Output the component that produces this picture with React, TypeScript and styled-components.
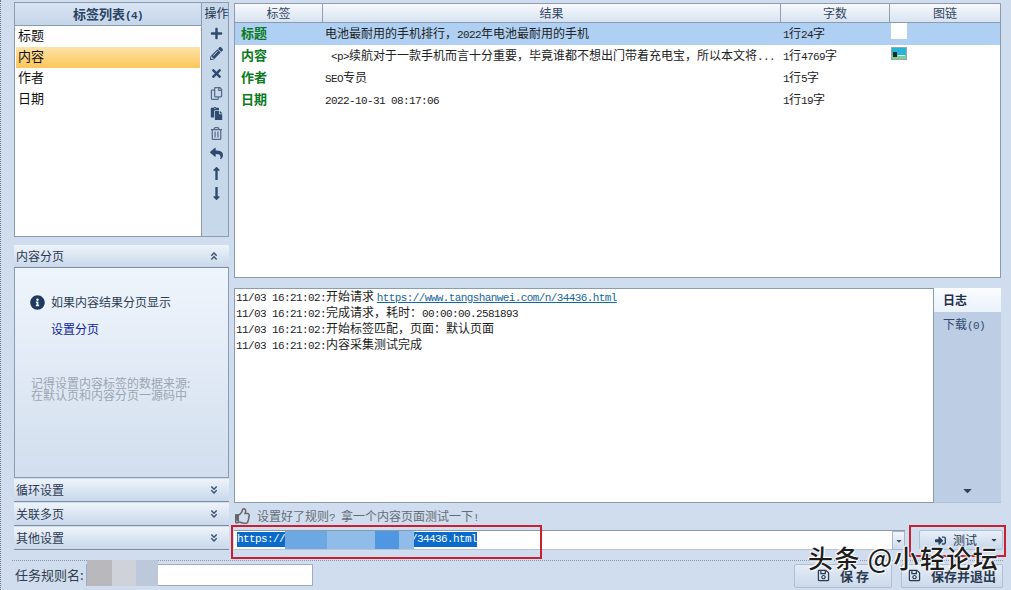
import React from "react";
import styled, { createGlobalStyle } from "styled-components";
import {
  FaPlus, FaPencilAlt, FaTimes, FaRegCopy, FaPaste, FaRegTrashAlt, FaReply,
  FaLongArrowAltUp, FaLongArrowAltDown, FaInfoCircle, FaAngleDoubleUp, FaAngleDoubleDown,
  FaRegThumbsUp, FaRegSave, FaSignInAlt, FaCaretDown,
} from "react-icons/fa";

const Global = createGlobalStyle`
  html, body { margin: 0; padding: 0; background: #d0ddee; }
  * { box-sizing: border-box; }
`;

const CJK = `"Noto Sans CJK SC", "Liberation Sans", sans-serif`;
const LINE = "#8b9bb0";

const Page = styled.div`
  position: relative;
  width: 1011px;
  height: 590px;
  overflow: hidden;
  background: #d0ddee;
  border-left: 1px dotted #6f7b8c;
  padding: 2px 10px 0 13px;
  font: 12px/16px ${CJK};
  color: #1c1c1c;
  display: flex;
  flex-direction: column;
`;
const M = styled.span`
  font-family: "Liberation Mono", monospace;
  font-size: 11px;
  letter-spacing: -0.6px;
  line-height: 1;
`;
const Main = styled.div`
  display: flex;
  gap: 5px;
  height: 548px;
`;
const LeftCol = styled.div`
  width: 215px;
  display: flex;
  flex-direction: column;
`;
const ListBox = styled.div`
  height: 236px;
  display: flex;
  border: 1px solid ${LINE};
  background: #c8d8eb;
`;
const ListPane = styled.div`
  flex: 1;
  display: flex;
  flex-direction: column;
  border-right: 1px solid ${LINE};
`;
const ListHead = styled.div`
  height: 23px;
  line-height: 21px;
  text-align: center;
  font-weight: 700;
  font-size: 13px;
  color: #2b4263;
  background: linear-gradient(#d8e4f3, #c6d6ea);
  border-bottom: 1px solid ${LINE};
`;
const ListBody = styled.div`
  flex: 1;
  background: #fff;
  padding: 0 1px;
`;
const ListItem = styled.div<{ $on?: boolean }>`
  height: 21px;
  line-height: 18px;
  padding-left: 2px;
  font-size: 13px;
  color: #111;
  background: ${(p) => (p.$on ? "linear-gradient(#fde3a8, #fcc65a)" : "transparent")};
`;
const Ops = styled.div`
  width: 26px;
  padding-left: 3px;
  display: flex;
  flex-direction: column;
  align-items: center;
  color: #2f4a6e;
`;
const OpsHead = styled.div`
  height: 20px;
  line-height: 20px;
  font-size: 12px;
  white-space: nowrap;
  color: #23344c;
`;
const OpIcon = styled.div<{ $soft?: boolean }>`
  height: 20px;
  display: flex;
  align-items: center;
  justify-content: center;
  font-size: 13px;
  color: ${(p) => (p.$soft ? "#566a86" : "#2f4a6e")};
`;
const Accordion = styled.div`
  margin-top: 8px;
  flex: 1;
  display: flex;
  flex-direction: column;
  gap: 1px;
`;
const AccHead = styled.div`
  height: 23px;
  display: flex;
  align-items: center;
  justify-content: space-between;
  padding: 0 10px 0 2px;
  font-size: 12px;
  color: #2a3a50;
  background: linear-gradient(#eef3fa, #c9d8eb);
  border-bottom: 1px solid #7d8da3;
  svg { font-size: 10px; color: #3e5677; }
`;
const AccBody = styled.div`
  height: 210px;
  margin-top: -1px;
  border: 1px solid ${LINE};
  border-top: 0;
  background: linear-gradient(#eff5fc, #d2deee);
  padding: 20px 0 0 15px;
`;
const InfoRow = styled.div`
  display: flex;
  align-items: center;
  gap: 6px;
  height: 16px;
  margin-top: 6px;
  color: #2c3e55;
  svg { font-size: 15px; color: #1f3a5c; }
`;
const PagerLink = styled.div`
  margin: 11px 0 0 21px;
  color: #10249c;
`;
const Note = styled.div`
  margin: 40px 0 0 1px;
  line-height: 12px;
  color: #9ba5b1;
`;
const RightCol = styled.div`
  flex: 1;
  display: flex;
  flex-direction: column;
`;
const Table = styled.div`
  height: 275px;
  margin-top: 1px;
  border: 1px solid ${LINE};
  background: #fff;
`;
const Cols = "88px 458px 109px 1fr";
const HeadRow = styled.div`
  display: grid;
  grid-template-columns: ${Cols};
  height: 19px;
  background: linear-gradient(#f7f9fc, #d8e3f1);
  border-bottom: 1px solid ${LINE};
`;
const HeadCell = styled.div`
  text-align: center;
  line-height: 18px;
  font-size: 12px;
  color: #33465f;
  border-right: 1px solid #8f9eb2;
  &:last-child { border-right: 0; }
`;
const Row = styled.div<{ $on?: boolean }>`
  display: grid;
  grid-template-columns: ${Cols};
  height: 22px;
  line-height: 20px;
  background: ${(p) => (p.$on ? "#afd0f3" : "transparent")};
`;
const TagCell = styled.div`
  padding-left: 6px;
  font-size: 13px;
  font-weight: 700;
  color: #0a7a1d;
`;
const Cell = styled.div`
  padding-left: 2px;
  font-size: 12px;
  white-space: pre;
  overflow: hidden;
  color: #222;
`;
const WhiteThumb = styled.div`
  width: 16px;
  height: 16px;
  margin-left: -1px;
  background: #fff;
`;
const Thumb = styled.svg`
  display: block;
  margin: 2px 0 0 -1px;
`;
const LogWrap = styled.div`
  height: 215px;
  margin-top: 10px;
  display: flex;
`;
const Log = styled.div`
  flex: 1;
  background: #fff;
  border: 1px solid ${LINE};
  padding: 0 1px;
  font-size: 12px;
`;
const LogLine = styled.div`
  height: 16px;
  line-height: 14px;
  white-space: pre;
`;
const LogLink = styled.span`
  font-family: "Liberation Mono", monospace;
  font-size: 11px;
  letter-spacing: -0.6px;
  line-height: 1;
  color: #14689c;
  text-decoration: underline;
`;
const Tabs = styled.div`
  width: 67px;
  display: flex;
  flex-direction: column;
  background: #bccde4;
  border-bottom: 1px solid #b0c1d8;
`;
const Tab = styled.div<{ $on?: boolean }>`
  height: 24px;
  line-height: 23px;
  padding-left: 9px;
  font-size: 12px;
  font-weight: ${(p) => (p.$on ? 700 : 400)};
  color: ${(p) => (p.$on ? "#1e2f47" : "#2f4a6e")};
  background: ${(p) => (p.$on ? "linear-gradient(#fafcff, #eaf2fb)" : "transparent")};
`;
const TabSpacer = styled.div`
  flex: 1;
`;
const TabArrow = styled.div`
  text-align: center;
  height: 20px;
  line-height: 20px;
  font-size: 13px;
  color: #2d4464;
`;
const Hint = styled.div`
  height: 27px;
  display: flex;
  align-items: center;
  gap: 6px;
  padding: 0 0 1px 1px;
  color: #666c75;
  white-space: pre;
  svg { font-size: 16px; color: #666; }
`;
const InputRow = styled.div`
  height: 20px;
  display: flex;
  margin-right: -3px;
`;
const UrlBox = styled.div`
  width: 671px;
  display: flex;
  background: #fff;
  border-top: 1px solid #8f98a5;
  border-bottom: 1px solid #b8c3d2;
  padding: 1px 0 0 3px;
`;
const UrlText = styled.div`
  flex: 1;
  display: flex;
  height: 15px;
`;
const Sel = styled.span`
  font: 11px/15px "Liberation Mono", monospace;
  letter-spacing: -0.6px;
  background: #0b6bcb;
  color: #fff;
`;
const SelTail = styled(Sel)`
  margin-left: -3px;
`;
const Mosaic = styled.span<{ $w: number; $c: string }>`
  position: relative;
  z-index: 1;
  width: ${(p) => p.$w}px;
  height: 18px;
  margin-top: -1px;
  background: ${(p) => p.$c};
`;
const DropBtn = styled.div`
  width: 13px;
  height: 19px;
  margin-top: -1px;
  display: flex;
  align-items: center;
  justify-content: center;
  font-size: 8px;
  color: #3c4e68;
  background: linear-gradient(#f1f5fb, #cfdcec);
  border: 1px solid #a9b7ca;
`;
const TestBtn = styled.div`
  width: 84px;
  margin-left: 14px;
  display: flex;
  align-items: center;
  padding: 0 4px 0 15px;
  gap: 7px;
  color: #26384f;
  background: linear-gradient(#e9f0f9, #c8d7ea);
  border: 1px solid #b0bfd3;
  border-radius: 2px;
  svg { font-size: 11px; color: #27405f; }
  svg:last-child { margin-left: auto; font-size: 8px; }
`;
const Footer = styled.div`
  height: 30px;
  margin: 10px -2px 0 -2px;
  border-top: 1px dotted #8d99aa;
  display: flex;
  align-items: center;
  padding: 0 0 2px 3px;
`;
const NameLabel = styled.div`
  width: 71px;
  font-size: 13px;
  color: #333d4b;
  white-space: nowrap;
`;
const NameBox = styled.div`
  width: 227px;
  height: 22px;
  display: flex;
  background: #fff;
  border: 1px solid #a0acbd;
`;
const Blur = styled.span<{ $w: number; $c: string }>`
  width: ${(p) => p.$w}px;
  height: 26px;
  margin-top: -5px;
  background: ${(p) => p.$c};
`;
const FootSpacer = styled.div`
  flex: 1;
`;
const SaveBtn = styled.div<{ $w: number }>`
  width: ${(p) => p.$w}px;
  height: 24px;
  margin: 2px 0 0 9px;
  display: flex;
  align-items: center;
  justify-content: center;
  gap: 10px;
  font-size: 13px;
  font-weight: 700;
  color: #2b3a4e;
  background: linear-gradient(#e3ebf6, #ccdaeb);
  border: 1px solid #b0bfd3;
  border-radius: 2px;
  svg { font-size: 13px; }
`;
const RedBox = styled.div<{ $x: number; $y: number; $w: number; $h: number }>`
  position: absolute;
  left: ${(p) => p.$x}px;
  top: ${(p) => p.$y}px;
  width: ${(p) => p.$w}px;
  height: ${(p) => p.$h}px;
  border: 2px solid #c8202f;
`;
const Watermark = styled.div`
  position: absolute;
  left: 807px;
  top: 542px;
  font: 500 25px/30px ${CJK};
  letter-spacing: 1.4px;
  white-space: nowrap;
  color: #1d1d1d;
  text-shadow: 0 0 2px #fff, 0 0 2px #fff, 1px 1px 1px #fff, -1px -1px 1px #fff;
`;

const rows = [
  {
    tag: "标题",
    on: true,
    text: <>电池最耐用的手机排行，<M>2022</M>年电池最耐用的手机</>,
    count: <><M>1</M>行<M>24</M>字</>,
    pic: <WhiteThumb />,
  },
  {
    tag: "内容",
    text: <><M> &lt;p&gt;</M>续航对于一款手机而言十分重要，毕竟谁都不想出门带着充电宝，所以本文将<M>...</M></>,
    count: <><M>1</M>行<M>4769</M>字</>,
    pic: (
      <Thumb width="16" height="13" viewBox="0 0 16 13">
        <rect width="16" height="13" fill="#8fa7b8" />
        <rect x="1" y="1" width="14" height="11" fill="#27b4d8" />
        <rect x="1" y="8" width="14" height="4" fill="#7fd08a" />
        <rect x="2" y="5" width="4" height="5" fill="#143018" />
        <rect x="7" y="8" width="7" height="1" fill="#e8f4f0" />
      </Thumb>
    ),
  },
  { tag: "作者", text: <><M>SEO</M>专员</>, count: <><M>1</M>行<M>5</M>字</> },
  { tag: "日期", text: <M>2022-10-31 08:17:06</M>, count: <><M>1</M>行<M>19</M>字</> },
];

const T = <M>11/03 16:21:02:</M>;

export default function App() {
  return (
    <Page>
      <Global />
      <Main>
        <LeftCol>
          <ListBox>
            <ListPane>
              <ListHead>标签列表<M>(4)</M></ListHead>
              <ListBody>
                <ListItem>标题</ListItem>
                <ListItem $on>内容</ListItem>
                <ListItem>作者</ListItem>
                <ListItem>日期</ListItem>
              </ListBody>
            </ListPane>
            <Ops>
              <OpsHead>操作</OpsHead>
              <OpIcon><FaPlus /></OpIcon>
              <OpIcon><FaPencilAlt /></OpIcon>
              <OpIcon><FaTimes /></OpIcon>
              <OpIcon $soft><FaRegCopy /></OpIcon>
              <OpIcon><FaPaste /></OpIcon>
              <OpIcon $soft><FaRegTrashAlt /></OpIcon>
              <OpIcon><FaReply /></OpIcon>
              <OpIcon><FaLongArrowAltUp size={15} /></OpIcon>
              <OpIcon><FaLongArrowAltDown size={15} /></OpIcon>
            </Ops>
          </ListBox>
          <Accordion>
            <AccHead>内容分页<FaAngleDoubleUp /></AccHead>
            <AccBody>
              <InfoRow><FaInfoCircle />如果内容结果分页显示</InfoRow>
              <PagerLink>设置分页</PagerLink>
              <Note>记得设置内容标签的数据来源:<br />在默认页和内容分页一源码中</Note>
            </AccBody>
            <AccHead>循环设置<FaAngleDoubleDown /></AccHead>
            <AccHead>关联多页<FaAngleDoubleDown /></AccHead>
            <AccHead>其他设置<FaAngleDoubleDown /></AccHead>
          </Accordion>
        </LeftCol>
        <RightCol>
          <Table>
            <HeadRow>
              <HeadCell>标签</HeadCell>
              <HeadCell>结果</HeadCell>
              <HeadCell>字数</HeadCell>
              <HeadCell>图链</HeadCell>
            </HeadRow>
            {rows.map((r) => (
              <Row key={r.tag} $on={r.on}>
                <TagCell>{r.tag}</TagCell>
                <Cell>{r.text}</Cell>
                <Cell>{r.count}</Cell>
                <Cell>{r.pic}</Cell>
              </Row>
            ))}
          </Table>
          <LogWrap>
            <Log>
              <LogLine>{T}开始请求 <LogLink>https://www.tangshanwei.com/n/34436.html</LogLink></LogLine>
              <LogLine>{T}完成请求，耗时：<M>00:00:00.2581893</M></LogLine>
              <LogLine>{T}开始标签匹配，页面：默认页面</LogLine>
              <LogLine>{T}内容采集测试完成</LogLine>
            </Log>
            <Tabs>
              <Tab $on>日志</Tab>
              <Tab>下载<M>(0)</M></Tab>
              <TabSpacer />
              <TabArrow><FaCaretDown /></TabArrow>
            </Tabs>
          </LogWrap>
          <Hint><FaRegThumbsUp /><span>设置好了规则<M>? </M>拿一个内容页面测试一下<M>!</M></span></Hint>
          <InputRow>
            <UrlBox>
              <UrlText>
                <Sel>https://</Sel>
                <Mosaic $w={42} $c="#6ea8e2" />
                <Mosaic $w={48} $c="#8fbce9" />
                <Mosaic $w={24} $c="#4f97e2" />
                <Mosaic $w={15} $c="#8fbce9" />
                <SelTail>/34436.html</SelTail>
              </UrlText>
              <DropBtn><FaCaretDown /></DropBtn>
            </UrlBox>
            <TestBtn><FaSignInAlt />测试<FaCaretDown /></TestBtn>
          </InputRow>
        </RightCol>
      </Main>
      <Footer>
        <NameLabel>任务规则名:</NameLabel>
        <NameBox>
          <Blur $w={25} $c="#b9b9bd" />
          <Blur $w={24} $c="#cfd2d8" />
          <Blur $w={22} $c="#bdc9da" />
        </NameBox>
        <FootSpacer />
        <SaveBtn $w={98}><FaRegSave />保 存</SaveBtn>
        <SaveBtn $w={102}><FaRegSave />保存并退出</SaveBtn>
      </Footer>
      <RedBox $x={230} $y={525} $w={311} $h={34} />
      <RedBox $x={908} $y={525} $w={97} $h={32} />
      <Watermark>头条 @小轻论坛</Watermark>
    </Page>
  );
}
